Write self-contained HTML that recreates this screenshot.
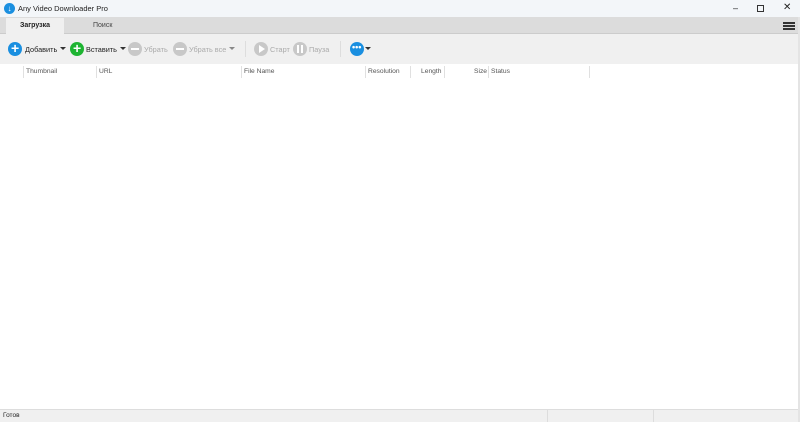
<!DOCTYPE html><html><head><meta charset="utf-8"><style>
*{margin:0;padding:0;box-sizing:border-box}
body{width:800px;height:422px;overflow:hidden;font-family:"Liberation Sans",sans-serif;background:#fff;position:relative;font-size:7px;color:#222}
.a{position:absolute}
.ic{position:absolute;width:14px;height:14px;border-radius:50%;top:42px}
.t{position:absolute;top:45px;font-size:7.3px}
.g{color:#aaa}
.arr{position:absolute;top:47px;width:0;height:0;border-left:3px solid transparent;border-right:3px solid transparent;border-top:3px solid #333}
.h{position:absolute;top:68px;color:#555;font-size:6.7px}
.s{position:absolute;top:66px;width:1px;height:12px;background:#e0e0e0}
</style></head><body>
<div class="a" style="left:0;top:0;width:800px;height:17px;background:#f3f6f9"></div>
<div class="a" style="left:4px;top:3px;width:11px;height:11px;border-radius:50%;background:#1a8fe0;color:#fff;font-size:8px;text-align:center;line-height:11px">↓</div>
<div class="a" style="left:18px;top:4px;font-size:7.5px">Any Video Downloader Pro</div>
<div class="a" style="left:733px;top:3px;font-size:9px">–</div>
<div class="a" style="left:757px;top:5px;width:7px;height:7px;border:1px solid #333"></div>
<div class="a" style="left:783px;top:2px;font-size:10px">✕</div>
<div class="a" style="left:0;top:17px;width:800px;height:17px;background:#dcdcdc;border-bottom:1px solid #ccc"></div>
<div class="a" style="left:6px;top:18px;width:58px;height:16px;background:#f0f0f0;font-weight:bold;text-align:center;line-height:16px">Загрузка</div>
<div class="a" style="left:93px;top:22px;color:#444">Поиск</div>
<div class="a" style="left:783px;top:22px;width:12px;height:2px;background:#333;box-shadow:0 3px 0 #333,0 6px 0 #333"></div>
<div class="a" style="left:0;top:34px;width:800px;height:30px;background:#f0f0f0"></div>
<div class="ic" style="left:8px;background:#1a8fe0"></div><div class="a" style="left:11px;top:40px;color:#fff;font-size:14px;font-weight:bold">+</div>
<div class="t" style="left:25px">Добавить</div><div class="arr" style="left:60px"></div>
<div class="ic" style="left:70px;background:#1eb432"></div><div class="a" style="left:73px;top:40px;color:#fff;font-size:14px;font-weight:bold">+</div>
<div class="t" style="left:86px">Вставить</div><div class="arr" style="left:120px"></div>
<div class="ic" style="left:128px;background:#c8c8c8"></div><div class="a" style="left:131px;top:48px;width:8px;height:2px;background:#fff"></div>
<div class="t g" style="left:144px">Убрать</div>
<div class="ic" style="left:173px;background:#c8c8c8"></div><div class="a" style="left:176px;top:48px;width:8px;height:2px;background:#fff"></div>
<div class="t g" style="left:189px">Убрать все</div><div class="arr" style="left:229px;border-top-color:#888"></div>
<div class="a" style="left:245px;top:41px;width:1px;height:16px;background:#ddd"></div>
<div class="ic" style="left:254px;background:#c8c8c8"></div><div class="a" style="left:259px;top:45px;border-left:6px solid #fff;border-top:4px solid transparent;border-bottom:4px solid transparent"></div>
<div class="t g" style="left:270px">Старт</div>
<div class="ic" style="left:293px;background:#c8c8c8"></div><div class="a" style="left:297px;top:45px;width:2px;height:8px;background:#fff;box-shadow:4px 0 0 #fff"></div>
<div class="t g" style="left:309px">Пауза</div>
<div class="a" style="left:340px;top:41px;width:1px;height:16px;background:#ddd"></div>
<div class="ic" style="left:350px;background:#1a8fe0"></div><div class="a" style="left:352px;top:42px;color:#fff;font-size:9px;font-weight:bold">•••</div>
<div class="arr" style="left:365px"></div>
<div class="s" style="left:23px"></div><div class="h" style="left:26px">Thumbnail</div>
<div class="s" style="left:96px"></div><div class="h" style="left:99px">URL</div>
<div class="s" style="left:241px"></div><div class="h" style="left:244px">File Name</div>
<div class="s" style="left:365px"></div><div class="h" style="left:368px">Resolution</div>
<div class="s" style="left:410px"></div><div class="h" style="left:421px">Length</div>
<div class="s" style="left:444px"></div><div class="h" style="left:474px">Size</div>
<div class="s" style="left:488px"></div><div class="h" style="left:491px">Status</div>
<div class="s" style="left:589px"></div>
<div class="a" style="left:0;top:409px;width:800px;height:13px;background:#f0f0f0;border-top:1px solid #ddd"></div>
<div class="a" style="left:3px;top:412px;font-size:6.5px">Готов</div>
<div class="a" style="left:547px;top:410px;width:1px;height:12px;background:#ddd"></div>
<div class="a" style="left:653px;top:410px;width:1px;height:12px;background:#ddd"></div>
<div class="a" style="left:798px;top:17px;width:2px;height:405px;background:#e4e4e4"></div>
</body></html>
